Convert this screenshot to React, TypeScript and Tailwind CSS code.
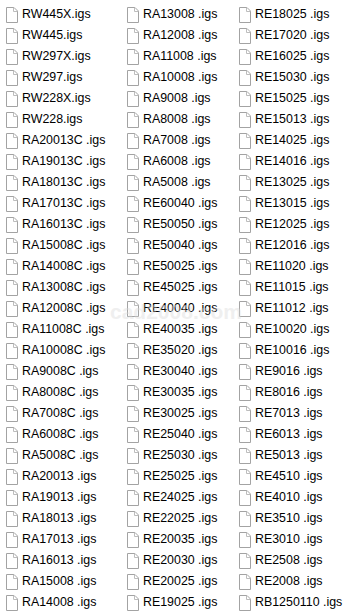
const columns = [
  [
    'RW445X.igs', 'RW445.igs', 'RW297X.igs', 'RW297.igs', 'RW228X.igs', 'RW228.igs',
    'RA20013C .igs', 'RA19013C .igs', 'RA18013C .igs', 'RA17013C .igs', 'RA16013C .igs',
    'RA15008C .igs', 'RA14008C .igs', 'RA13008C .igs', 'RA12008C .igs', 'RA11008C .igs',
    'RA10008C .igs', 'RA9008C .igs', 'RA8008C .igs', 'RA7008C .igs', 'RA6008C .igs',
    'RA5008C .igs', 'RA20013 .igs', 'RA19013 .igs', 'RA18013 .igs', 'RA17013 .igs',
    'RA16013 .igs', 'RA15008 .igs', 'RA14008 .igs',
  ],
  [
    'RA13008 .igs', 'RA12008 .igs', 'RA11008 .igs', 'RA10008 .igs', 'RA9008 .igs',
    'RA8008 .igs', 'RA7008 .igs', 'RA6008 .igs', 'RA5008 .igs', 'RE60040 .igs',
    'RE50050 .igs', 'RE50040 .igs', 'RE50025 .igs', 'RE45025 .igs', 'RE40040 .igs',
    'RE40035 .igs', 'RE35020 .igs', 'RE30040 .igs', 'RE30035 .igs', 'RE30025 .igs',
    'RE25040 .igs', 'RE25030 .igs', 'RE25025 .igs', 'RE24025 .igs', 'RE22025 .igs',
    'RE20035 .igs', 'RE20030 .igs', 'RE20025 .igs', 'RE19025 .igs',
  ],
  [
    'RE18025 .igs', 'RE17020 .igs', 'RE16025 .igs', 'RE15030 .igs', 'RE15025 .igs',
    'RE15013 .igs', 'RE14025 .igs', 'RE14016 .igs', 'RE13025 .igs', 'RE13015 .igs',
    'RE12025 .igs', 'RE12016 .igs', 'RE11020 .igs', 'RE11015 .igs', 'RE11012 .igs',
    'RE10020 .igs', 'RE10016 .igs', 'RE9016 .igs', 'RE8016 .igs', 'RE7013 .igs',
    'RE6013 .igs', 'RE5013 .igs', 'RE4510 .igs', 'RE4010 .igs', 'RE3510 .igs',
    'RE3010 .igs', 'RE2508 .igs', 'RE2008 .igs', 'RB1250110 .igs',
  ],
];

function FileIcon() {
  return (
    <svg width="12" height="16" viewBox="0 0 12 16" className="shrink-0">
      <path d="M0.5 0.5 H8 L11.5 4 V15.5 H0.5 Z" fill="#ffffff" stroke="#a3a3a3" />
      <path d="M7.5 0.5 V4.5 H11.5" fill="none" stroke="#bdbdbd" />
    </svg>
  );
}

export default function App() {
  return (
    <div className="relative w-[350px] h-[614px] bg-white overflow-hidden">
      <div className="flex pt-[4px] pl-[6px]">
        {columns.map((col, i) => (
          <div key={i} className={i === 0 ? 'w-[121px]' : i === 1 ? 'w-[112px]' : 'w-[110px]'}>
            {col.map((name) => (
              <div key={name} className="flex items-center gap-[4px] h-[21px]">
                <FileIcon />
                <span className="text-[12.4px] leading-none text-black whitespace-nowrap font-['Liberation_Sans',sans-serif]">
                  {name}
                </span>
              </div>
            ))}
          </div>
        ))}
      </div>
      <div className="absolute left-[110px] top-[296px] text-[21px] font-bold text-[#d8d8d8] opacity-40 font-['Liberation_Sans',sans-serif] pointer-events-none">
        cad2008.com
      </div>
    </div>
  );
}
